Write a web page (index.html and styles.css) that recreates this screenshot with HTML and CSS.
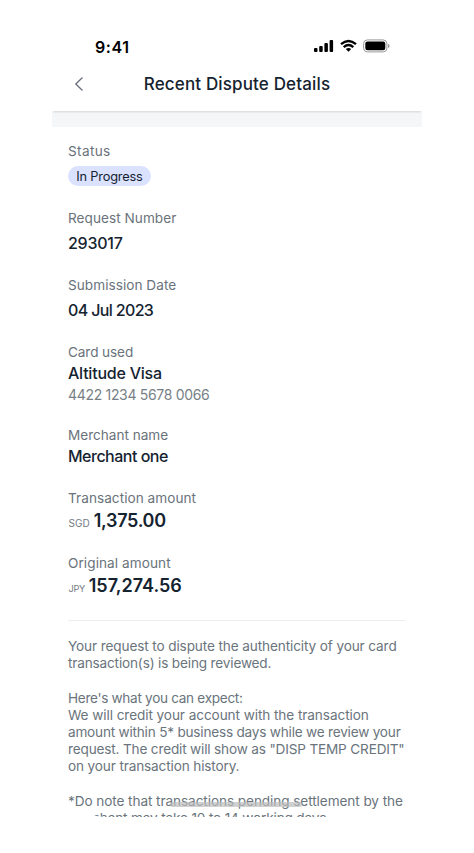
FILE: index.html
```html
<!DOCTYPE html>
<html lang="en">
<head>
<meta charset="utf-8">
<title>Recent Dispute Details</title>
<link rel="stylesheet" href="styles.css">
</head>
<body>
<main class="phone">
  <div class="statusbar">
    <span class="time">9:41</span>
    <div class="system">
      <svg width="20" height="14" viewBox="0 0 20 14"><rect x="0" y="9" width="3.5" height="4" rx="1"/><rect x="5.2" y="7" width="3.5" height="6" rx="1"/><rect x="10.4" y="4" width="3.5" height="9" rx="1"/><rect x="15.6" y="1" width="3.5" height="12" rx="1"/></svg>
      <svg width="17" height="14" viewBox="0 0 17 14"><g fill="none" stroke="#000" stroke-width="2.3"><path d="M1 5.2Q8.500-1.300 16 5.200"/><path d="M3.700 8.100Q8.500 4 13.300 8.100"/></g><path d="M5.800 10Q8.500 7.900 11.200 10L8.500 12.700Z"/></svg>
      <svg width="27" height="14" viewBox="0 0 27 14"><rect x=".6" y=".9" width="23.300" height="12" rx="3.800" fill="#fff" stroke="#999"/><rect x="2.300" y="2.500" width="20" height="8.800" rx="2.200"/><path d="M25 4.800q1.600.7 1.600 2.100T25 9z" fill="#999"/></svg>
    </div>
  </div>
  <header class="header">
    <svg class="back" width="10" height="16" viewBox="0 0 10 16"><path d="M8.500 1.500 1.800 8 8.500 14.500" fill="none" stroke="#68707a" stroke-width="1.300"/></svg>
    <h1>Recent Dispute Details</h1>
  </header>
  <div class="band"></div>
  <div class="content">
    <section class="status"><h2 class="l-status">Status</h2><span class="badge">In Progress</span></section>
    <section class="spaced"><h2 class="l-request">Request Number</h2><p class="value v-number">293017</p></section>
    <section class="spaced"><h2 class="l-date">Submission Date</h2><p class="value v-date">04 Jul 2023</p></section>
    <section class="card"><h2 class="l-card">Card used</h2><p class="value v-card">Altitude Visa</p><p class="digits">4422 1234 5678 0066</p></section>
    <section class="merchant"><h2 class="l-merchant">Merchant name</h2><p class="value v-merchant">Merchant one</p></section>
    <section class="money"><h2 class="l-transaction">Transaction amount</h2><p class="amount a-sgd"><small>SGD</small><b>1,375.00</b></p></section>
    <section class="money"><h2 class="l-original">Original amount</h2><p class="amount a-jpy"><small>JPY</small><b>157,274.56</b></p></section>
    <div class="notes">
      <p><span class="n1">Your request to dispute the authenticity of your card</span><br><span class="n2">transaction(s) is being reviewed.</span></p>
      <p><span class="n3">Here's what you can expect:</span><br><span class="n4">We will credit your account with the transaction</span><br><span class="n5">amount within 5* business days while we review your</span><br><span class="n6">request. The credit will show as "DISP TEMP CREDIT"</span><br><span class="n7">on your transaction history.</span></p>
      <p><span class="n8">*Do note that transactions pending settlement by the</span><br><span class="n9">merchant may take 10 to 14 working days.</span></p>
    </div>
  </div>
  <div class="home"></div>
</main>
</body>
</html>
```
FILE: styles.css
```css
* { box-sizing: border-box; }
body { margin: 0; height: 853px; overflow: hidden; background: #fff; font-family: Inter, "Liberation Sans", sans-serif; color: #152330; }
h1, h2, p { margin: 0; }
svg { display: block; }
.phone { position: relative; width: 370px; height: 817px; margin: 0 52px; overflow: hidden; border-radius: 0 0 40px 56px; background: #fff; }
.statusbar { height: 60px; padding: 33px 32px 0 43px; display: flex; justify-content: space-between; align-items: flex-start; }
.time { font-size: 16px; line-height: 28px; font-weight: 600; letter-spacing: .6px; color: #000; }
.system { display: flex; gap: 6px; padding-top: 6px; }
.header { height: 51px; display: grid; grid-template-columns: 1fr auto 1fr; align-items: center; padding: 0 22px 3px; box-shadow: 0 2px 2px -1px #0002; position: relative; }
h1 { font-size: 17px; line-height: 24px; font-weight: 500; letter-spacing: .15px; }
.band { height: 16px; background: #f5f6f8; }
.content { padding: 14px 16px 0; }
h2 { font-size: 13.6px; line-height: 20px; font-weight: 400; color: #6a737b; white-space: nowrap; }
.l-status { letter-spacing: .35px; }
.l-request { letter-spacing: .04px; }
.l-date { letter-spacing: .04px; }
.l-card { letter-spacing: -.1px; }
.l-merchant { letter-spacing: -.02px; }
.l-transaction { letter-spacing: .04px; }
.l-original { letter-spacing: .07px; }
.value { font-size: 16px; line-height: 22px; font-weight: 500; margin-top: 0; white-space: nowrap; }
.v-number { letter-spacing: -.25px; }
.v-date { letter-spacing: -.64px; }
.v-card { letter-spacing: -.23px; }
.v-merchant { letter-spacing: -.5px; }
.status { height: 67px; }
.badge { display: flex; width: 83px; height: 20px; margin-top: 5px; padding-top: 1px; border-radius: 10px; align-items: center; justify-content: center; background: #dbe2ff; font-size: 12.8px; letter-spacing: -.2px; }
.spaced { height: 67px; }
.spaced .value { margin-top: 4px; }
.card { height: 83px; }
.digits { margin-top: 1px; font-size: 14px; line-height: 20px; letter-spacing: -.32px; color: #777f86; white-space: nowrap; }
.merchant { height: 63px; }
.money { height: 65px; }
.amount { display: flex; align-items: baseline; gap: 4px; line-height: 26px; }
.amount small { margin-left: .6px; font-size: 10px; color: #737b82; }
.amount b { font-size: 18px; font-weight: 600; }
.a-sgd b { letter-spacing: -.3px; }
.a-jpy { gap: 4px; }
.a-jpy small { font-size: 9.2px; letter-spacing: -.4px; }
.notes { border-top: 1px solid #eceef0; margin-top: 2px; padding-top: 17px; font-size: 13.6px; line-height: 17.200px; color: #6a747c; white-space: nowrap; }
.notes p + p { margin-top: 17.200px; }
.n1 { letter-spacing: -.12px; }
.n2 { letter-spacing: -.17px; }
.n3 { letter-spacing: -.31px; }
.n4 { letter-spacing: -.08px; }
.n5 { letter-spacing: -.21px; }
.n6 { letter-spacing: -.17px; }
.n7 { letter-spacing: -.14px; }
.n8 { letter-spacing: -.08px; }
.n9 { letter-spacing: -.16px; }
.home { position: absolute; left: 118px; top: 802px; width: 132px; height: 5px; border-radius: 3px; background: #bdbdbdb3; }
```
